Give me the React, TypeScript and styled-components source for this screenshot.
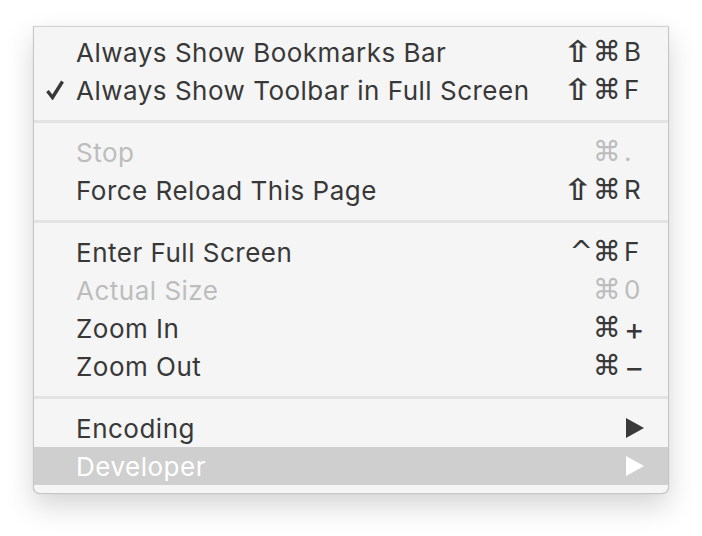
import React from "react";
import styled, { createGlobalStyle } from "styled-components";

type Item =
  | { kind: "sep" }
  | {
      kind: "item";
      label: string;
      shift?: boolean;
      mods?: string;
      keyChar?: string;
      checked?: boolean;
      disabled?: boolean;
      submenu?: boolean;
      active?: boolean;
    };

const items: Item[] = [
  { kind: "item", label: "Always Show Bookmarks Bar", shift: true, mods: "⌘", keyChar: "B" },
  { kind: "item", label: "Always Show Toolbar in Full Screen", shift: true, mods: "⌘", keyChar: "F", checked: true },
  { kind: "sep" },
  { kind: "item", label: "Stop", mods: "⌘", keyChar: ".", disabled: true },
  { kind: "item", label: "Force Reload This Page", shift: true, mods: "⌘", keyChar: "R" },
  { kind: "sep" },
  { kind: "item", label: "Enter Full Screen", mods: "^⌘", keyChar: "F" },
  { kind: "item", label: "Actual Size", mods: "⌘", keyChar: "0", disabled: true },
  { kind: "item", label: "Zoom In", mods: "⌘", keyChar: "+" },
  { kind: "item", label: "Zoom Out", mods: "⌘", keyChar: "−" },
  { kind: "sep" },
  { kind: "item", label: "Encoding", submenu: true },
  { kind: "item", label: "Developer", submenu: true, active: true },
];

const isSymbol = (k?: string) => k === "+" || k === "−";

const GlobalStyle = createGlobalStyle`
  html, body {
    margin: 0;
    padding: 0;
    background: #ffffff;
  }
  body {
    font-family: Inter, "Noto Sans", "DejaVu Sans", sans-serif;
    -webkit-font-smoothing: antialiased;
  }
`;

const Page = styled.div`
  padding: 26px 0 0 33px;
  width: 702px;
  height: 536px;
  box-sizing: border-box;
`;

const Menu = styled.div`
  width: 636px;
  box-sizing: border-box;
  background: #f5f5f5;
  border: 1px solid #c6c6c6;
  border-top-color: #d2d2d2;
  border-radius: 0 0 7px 7px;
  padding: 6px 0 8px;
  box-shadow: 0 12px 28px rgba(0, 0, 0, 0.17), 0 0 1px rgba(0, 0, 0, 0.2);
`;

const Row = styled.div<{ $disabled?: boolean; $active?: boolean }>`
  display: flex;
  align-items: center;
  height: 38px;
  padding: 0 24px 0 12px;
  font-size: 26px;
  letter-spacing: 0.5px;
  color: ${(p) => (p.$active ? "#ffffff" : p.$disabled ? "#bdbdbd" : "#383838")};
  background: ${(p) => (p.$active ? "#cfcfcf" : "transparent")};
`;

const Check = styled.span`
  width: 30px;
  flex: none;
  display: flex;
  align-items: center;
`;

const Label = styled.span`
  flex: 1;
  white-space: nowrap;
`;

const Shortcut = styled.span`
  display: flex;
  align-items: center;
  letter-spacing: 0;
  line-height: 1;
`;

const Shift = styled.span`
  display: inline-block;
  width: 22px;
  margin-right: 6px;
  text-align: center;
  font-family: "DejaVu Sans", sans-serif;
  font-size: 30px;
  font-weight: 700;
  transform: scaleX(1.2);
`;

const Mods = styled.span`
  font-family: "DejaVu Sans", sans-serif;
  font-size: 28px;
  text-align: right;
`;

const KeyChar = styled.span<{ $symbol?: boolean }>`
  width: 20px;
  padding-left: 3px;
  font-size: ${(p) => (p.$symbol ? "31px" : "26px")};
  text-align: left;
`;

const Separator = styled.div`
  height: 24px;
  display: flex;
  align-items: center;
  &::after {
    content: "";
    display: block;
    width: 100%;
    height: 3px;
    background: #e3e3e3;
  }
`;

const Arrow = styled.svg`
  width: 18px;
  height: 20px;
`;

const CheckMark = () => (
  <svg width="18" height="20" viewBox="0 0 18 20">
    <path d="M1.5 11 L6.5 17.5 L16.5 1.5" fill="none" stroke="#383838" strokeWidth="3.4" />
  </svg>
);

export default function App() {
  return (
    <>
      <GlobalStyle />
      <Page>
        <Menu>
          {items.map((it, i) =>
            it.kind === "sep" ? (
              <Separator key={i} />
            ) : (
              <Row key={i} $disabled={it.disabled} $active={it.active}>
                <Check>{it.checked && <CheckMark />}</Check>
                <Label>{it.label}</Label>
                {it.submenu ? (
                  <Arrow viewBox="0 0 18 20">
                    <path d="M0 0 L18 10 L0 20 Z" fill={it.active ? "#ffffff" : "#3a3a3a"} />
                  </Arrow>
                ) : (
                  <Shortcut>
                    {it.shift && <Shift>⇧</Shift>}
                    <Mods>{it.mods}</Mods>
                    <KeyChar $symbol={isSymbol(it.keyChar)}>{it.keyChar}</KeyChar>
                  </Shortcut>
                )}
              </Row>
            )
          )}
        </Menu>
      </Page>
    </>
  );
}
